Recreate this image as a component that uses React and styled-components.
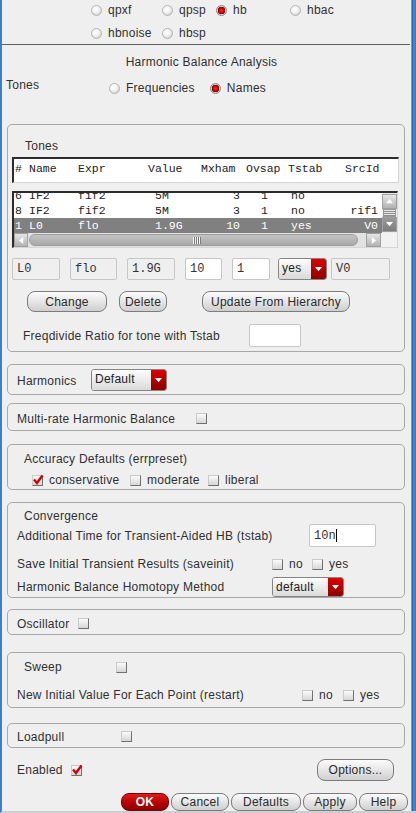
import styled, { createGlobalStyle } from 'styled-components'

const GlobalStyle = createGlobalStyle`
  html, body { margin: 0; padding: 0; background: #efefef; }
  body {
    font-family: 'Liberation Sans', Arial, sans-serif;
    font-size: 12px;
    color: #303030;
    letter-spacing: 0.25px;
  }
  * { box-sizing: border-box; }
`

const analyses = [
  { name: 'qpxf' },
  { name: 'qpsp' },
  { name: 'hb', on: true },
  { name: 'hbac' },
  { name: 'hbnoise' },
  { name: 'hbsp' },
]

const tones = [
  ['6', 'IF2', 'fif2', '5M', '3', '1', 'no', ''],
  ['8', 'IF2', 'fif2', '5M', '3', '1', 'no', 'rif1'],
  ['1', 'L0', 'flo', '1.9G', '10', '1', 'yes', 'V0'],
]

function Radio({ on, children }) {
  return (
    <RadioItem>
      <RadioDot $on={on} />
      {children}
    </RadioItem>
  )
}

function Check({ on }) {
  return (
    <Box>
      {on && (
        <svg width="12" height="12" viewBox="0 0 12 12">
          <path d="M2 5.5 L5 9 L10.5 1.5" fill="none" stroke="#d40000" strokeWidth="2.4" />
        </svg>
      )}
    </Box>
  )
}

function CheckItem({ on, w, children }) {
  return (
    <CheckLabel $w={w}>
      <Check on={on} />
      {children}
    </CheckLabel>
  )
}

function Arrow({ dir = 'down', size = 7 }) {
  const pts = {
    down: '0,1 8,1 4,6',
    up: '0,6 8,6 4,1',
    left: '6,0 6,8 1,4',
    right: '2,0 2,8 7,4',
  }
  return (
    <svg width={size} height={size} viewBox="0 0 8 8">
      <polygon points={pts[dir]} fill="#fff" />
    </svg>
  )
}

function Combo({ w, h, children }) {
  return (
    <ComboBox $w={w} $h={h}>
      <ComboText>{children}</ComboText>
      <ComboArrow>
        <Arrow dir="down" />
      </ComboArrow>
    </ComboBox>
  )
}

function ToneRow({ cells, sel }) {
  return (
    <TableRow $sel={sel}>
      <Cell $pl={1}>{cells[0]}</Cell>
      <Cell $pl={1}>{cells[1]}</Cell>
      <Cell $pl={1}>{cells[2]}</Cell>
      <Cell $pl={8}>{cells[3]}</Cell>
      <Cell $right $pr={5}>{cells[4]}</Cell>
      <Cell $pl={16}>{cells[5]}</Cell>
      <Cell $pl={4}>{cells[6]}</Cell>
      <Cell $right $pr={4}>{cells[7]}</Cell>
    </TableRow>
  )
}

export default function App() {
  return (
    <>
      <GlobalStyle />
      <Window>
        <Content>
          <AnalysisGrid>
            {analyses.map((a) => (
              <Radio key={a.name} on={a.on}>
                {a.name}
              </Radio>
            ))}
          </AnalysisGrid>
          <Separator />
          <Title>Harmonic Balance Analysis</Title>
          <TonesRow>
            <RowLabel $w={103}>Tones</RowLabel>
            <RadioGroup>
              <Radio>Frequencies</Radio>
              <Radio on>Names</Radio>
            </RadioGroup>
          </TonesRow>

          <Panel $mt={29} $pad="0 5px 4px 4px">
            <PanelTitle $ml={13} $mt={14}>Tones</PanelTitle>
            <HeaderBox>
              <TableRow>
                <Cell $pl={1}>#</Cell>
                <Cell $pl={1}>Name</Cell>
                <Cell $pl={1}>Expr</Cell>
                <Cell $pl={1}>Value</Cell>
                <Cell>Mxham</Cell>
                <Cell $pl={1}>Ovsap</Cell>
                <Cell $pl={1}>Tstab</Cell>
                <Cell $pl={1}>SrcId</Cell>
              </TableRow>
            </HeaderBox>
            <ListBox>
              <ListBody>
                <RowsViewport>
                  <RowsInner>
                    {tones.map((t, i) => (
                      <ToneRow key={i} cells={t} sel={i === 2} />
                    ))}
                  </RowsInner>
                </RowsViewport>
                <VScroll>
                  <ScrollBtn $h={15}>
                    <Arrow dir="up" />
                  </ScrollBtn>
                  <VThumb />
                  <ScrollBtn $h={15} $dark>
                    <Arrow dir="down" />
                  </ScrollBtn>
                </VScroll>
              </ListBody>
              <HScroll>
                <ScrollBtn $w={14}>
                  <Arrow dir="left" />
                </ScrollBtn>
                <Trough>
                  <HThumb>
                    <Grip />
                  </HThumb>
                </Trough>
                <ScrollBtn $w={15}>
                  <Arrow dir="right" />
                </ScrollBtn>
                <Corner />
              </HScroll>
            </ListBox>

            <EditRow>
              <Field $w={48}>L0</Field>
              <Field $w={47} $ml={10}>flo</Field>
              <Field $w={48} $ml={10}>1.9G</Field>
              <Field $w={37} $ml={10} $white>10</Field>
              <Field $w={38} $ml={10} $white>1</Field>
              <ComboSlot $ml={8}>
                <Combo w={49} h={22}>yes</Combo>
              </ComboSlot>
              <Field $w={59} $ml={4}>V0</Field>
            </EditRow>

            <ButtonRow>
              <Button $w={80} $h={21}>Change</Button>
              <Button $w={48} $h={21} $ml={12}>Delete</Button>
              <Button $w={148} $h={21} $ml={35}>Update From Hierarchy</Button>
            </ButtonRow>

            <FreqRow>
              <RowLabel $w={226}>Freqdivide Ratio for tone with Tstab</RowLabel>
              <Field $w={52} $h={23} $white />
            </FreqRow>
          </Panel>

          <Panel $mt={12} $h={31} $row $pt={1}>
            <RowLabel $w={74} $pt={2}>Harmonics</RowLabel>
            <Combo w={76} h={22}>Default</Combo>
          </Panel>

          <Panel $mt={8} $h={28} $row $pt={3}>
            <RowLabel $w={179}>Multi-rate Harmonic Balance</RowLabel>
            <Check />
          </Panel>

          <Panel $mt={13} $h={46}>
            <PanelTitle $ml={7} $mt={7}>Accuracy Defaults (errpreset)</PanelTitle>
            <OptionRow $mt={7} $pl={15}>
              <CheckItem on w={98}>conservative</CheckItem>
              <CheckItem w={78}>moderate</CheckItem>
              <CheckItem>liberal</CheckItem>
            </OptionRow>
          </Panel>

          <Panel $mt={12} $h={96}>
            <PanelTitle $ml={7} $mt={6}>Convergence</PanelTitle>
            <OptionRow $mt={1}>
              <RowLabel $w={292}>Additional Time for Transient-Aided HB (tstab)</RowLabel>
              <Field $w={67} $h={23} $white>
                10n<Caret />
              </Field>
            </OptionRow>
            <OptionRow $mt={10}>
              <RowLabel $w={255}>Save Initial Transient Results (saveinit)</RowLabel>
              <CheckItem w={40}>no</CheckItem>
              <CheckItem>yes</CheckItem>
            </OptionRow>
            <OptionRow $mt={6}>
              <RowLabel $w={255}>Harmonic Balance Homotopy Method</RowLabel>
              <Combo w={72} h={20}>default</Combo>
            </OptionRow>
          </Panel>

          <Panel $mt={11} $h={26} $row $pt={3}>
            <RowLabel $w={61}>Oscillator</RowLabel>
            <Check />
          </Panel>

          <Panel $mt={17} $h={56}>
            <OptionRow $mt={7} $pl={7}>
              <RowLabel $w={92}>Sweep</RowLabel>
              <Check />
            </OptionRow>
            <OptionRow $mt={14}>
              <RowLabel $w={285}>New Initial Value For Each Point (restart)</RowLabel>
              <CheckItem w={41}>no</CheckItem>
              <CheckItem>yes</CheckItem>
            </OptionRow>
          </Panel>

          <Panel $mt={15} $h={25} $row $pt={2}>
            <RowLabel $w={104}>Loadpull</RowLabel>
            <Check />
          </Panel>

          <EnabledRow>
            <RowLabel $w={54}>Enabled</RowLabel>
            <Check on />
            <Button $w={77} $h={22} $ml="auto">Options...</Button>
          </EnabledRow>

          <DialogButtons>
            <Button $w={48} $h={18} $primary>OK</Button>
            <Button $w={58} $h={18}>Cancel</Button>
            <Button $w={70} $h={18}>Defaults</Button>
            <Button $w={54} $h={18}>Apply</Button>
            <Button $w={49} $h={18}>Help</Button>
          </DialogButtons>
        </Content>
        <RightBar />
      </Window>
    </>
  )
}

const Window = styled.div`
  display: flex;
  width: 416px;
  height: 813px;
  border-left: 2px solid #3c7ec8;
  border-bottom: 2px solid #cfcfcf;
  background: #efefef;
  overflow: hidden;
`

const Content = styled.div`
  flex: 1;
  min-width: 0;
  display: flex;
  flex-direction: column;
`

const RightBar = styled.div`
  width: 5px;
  background: linear-gradient(to right, #6a9fd8 0, #6a9fd8 1px, #2c64aa 1px, #2c64aa 2px, #4b88cf 2px, #3b79c3 5px);
`

const AnalysisGrid = styled.div`
  display: grid;
  grid-template-columns: 71px 54px 74px auto;
  row-gap: 9px;
  padding: 3px 0 0 89px;
`

const RadioItem = styled.label`
  display: flex;
  align-items: center;
  gap: 6px;
  height: 14px;
  line-height: 14px;
  white-space: nowrap;
`

const RadioDot = styled.span`
  width: 11px;
  height: 11px;
  border-radius: 50%;
  flex: none;
  border: 1px solid ${(p) => (p.$on ? '#8a8a8a' : '#b4b4b4')};
  background: ${(p) =>
    p.$on
      ? 'radial-gradient(circle at 50% 50%, #ff2a2a 0, #d00000 2.5px, #7a0000 3.5px, #cfcfcf 4px, #9a9a9a 100%)'
      : 'radial-gradient(circle at 40% 35%, #ffffff 0, #f4f4f4 40%, #c2c2c2 100%)'};
`

const Separator = styled.div`
  height: 1px;
  margin: 4px 1px 0 -2px;
  background: #5e5e5e;
`

const Title = styled.div`
  margin-top: 10px;
  padding-right: 10px;
  line-height: 14px;
  text-align: center;
`

const TonesRow = styled.div`
  display: flex;
  margin-top: 9px;
  padding-left: 4px;
  height: 17px;
`

const RowLabel = styled.span`
  width: ${(p) => p.$w}px;
  padding-top: ${(p) => p.$pt || 0}px;
  flex: none;
  line-height: 14px;
  white-space: nowrap;
`

const RadioGroup = styled.div`
  display: flex;
  gap: 15px;
  padding-top: 3px;
`

const Panel = styled.section`
  margin: ${(p) => p.$mt}px 6px 0 5px;
  border: 1px solid #a8a8a8;
  border-radius: 5px;
  ${(p) => (p.$h ? `height: ${p.$h}px;` : '')}
  padding: ${(p) => p.$pad || `${p.$pt || 0}px 0 0 9px`};
  display: flex;
  flex-direction: ${(p) => (p.$row ? 'row' : 'column')};
  align-items: ${(p) => (p.$row ? 'center' : 'stretch')};
  flex: none;
`

const PanelTitle = styled.div`
  margin: ${(p) => p.$mt}px 0 0 ${(p) => p.$ml}px;
  line-height: 14px;
`

const Sunken = styled.div`
  border-top: 2px solid #2c2c2c;
  border-left: 2px solid #2c2c2c;
  border-right: 1px solid #d6d6d6;
  border-bottom: 1px solid #d6d6d6;
  background: #fff;
  font-family: 'Liberation Mono', 'Courier New', monospace;
  font-size: 11.5px;
  letter-spacing: 0;
  color: #222;
`

const HeaderBox = styled(Sunken)`
  margin-top: 4px;
  height: 26px;
  padding-top: 2px;
`

const ListBox = styled(Sunken)`
  margin: 8px 1px 0 0;
`

const ListBody = styled.div`
  display: flex;
  height: 40px;
`

const RowsViewport = styled.div`
  flex: 1;
  overflow: hidden;
`

const RowsInner = styled.div`
  margin-top: -5px;
`

const TableRow = styled.div`
  display: grid;
  grid-template-columns: 14px 49px 70px 54px 44px 42px 57px 1fr;
  height: 15px;
  line-height: 15px;
  background: ${(p) => (p.$sel ? '#808080' : 'transparent')};
  color: ${(p) => (p.$sel ? '#fff' : 'inherit')};
`

const Cell = styled.span`
  padding-left: ${(p) => p.$pl || 0}px;
  padding-right: ${(p) => p.$pr || 0}px;
  text-align: ${(p) => (p.$right ? 'right' : 'left')};
  white-space: nowrap;
  overflow: hidden;
`

const VScroll = styled.div`
  width: 15px;
  display: flex;
  flex-direction: column;
  padding-top: 1px;
  background: #ececec;
`

const ScrollBtn = styled.div`
  flex: none;
  ${(p) => (p.$w ? `width: ${p.$w}px;` : '')}
  ${(p) => (p.$h ? `height: ${p.$h}px;` : '')}
  display: flex;
  align-items: center;
  justify-content: center;
  background: ${(p) =>
    p.$dark
      ? 'linear-gradient(#9a9a9a, #7c7c7c)'
      : 'linear-gradient(#e6e6e6, #b2b2b2)'};
  border: 1px solid #a0a0a0;
`

const VThumb = styled.div`
  height: 8px;
  margin: 0 1px;
  background: repeating-linear-gradient(#e8e8e8 0, #e8e8e8 1px, #8e8e8e 1px, #8e8e8e 2px);
  border: 1px solid #999;
`

const HScroll = styled.div`
  display: flex;
  height: 14px;
  background: #ececec;
`

const Trough = styled.div`
  flex: 1;
  padding: 1px 8px 1px 1px;
  background: #e2e2e2;
`

const HThumb = styled.div`
  height: 100%;
  border-radius: 7px;
  background: linear-gradient(#c4c4c4, #a8a8a8);
  border: 1px solid #9c9c9c;
  display: flex;
  align-items: center;
  justify-content: center;
  padding-left: 6px;
`

const Grip = styled.span`
  width: 8px;
  height: 7px;
  background: repeating-linear-gradient(to right, #f0f0f0 0, #f0f0f0 1px, #7c7c7c 1px, #7c7c7c 2px);
`

const Corner = styled.div`
  width: 16px;
  background: #f2f2f2;
`

const EditRow = styled.div`
  display: flex;
  align-items: center;
  margin-top: 10px;
`

const Field = styled.div`
  flex: none;
  width: ${(p) => p.$w}px;
  height: ${(p) => p.$h || 22}px;
  margin-left: ${(p) => p.$ml || 0}px;
  border: 1px solid #c6c6c6;
  border-radius: 2px;
  background: ${(p) => (p.$white ? '#fff' : '#efefef')};
  padding: 0 4px;
  display: flex;
  align-items: center;
  font-family: 'Liberation Mono', 'Courier New', monospace;
  font-size: 12px;
  letter-spacing: 0;
  color: #333;
`

const Caret = styled.span`
  width: 1px;
  height: 13px;
  background: #000;
`

const ComboSlot = styled.div`
  margin-left: ${(p) => p.$ml}px;
`

const ComboBox = styled.div`
  flex: none;
  display: flex;
  width: ${(p) => p.$w}px;
  height: ${(p) => p.$h}px;
  border: 1px solid #858585;
  border-radius: 3px;
  overflow: hidden;
`

const ComboText = styled.span`
  flex: 1;
  padding: 2px 0 0 3px;
  background: linear-gradient(#fdfdfd, #dadada);
  line-height: 14px;
  color: #222;
`

const ComboArrow = styled.span`
  width: 15px;
  display: flex;
  align-items: center;
  justify-content: center;
  background: linear-gradient(#dc0000, #8c0000);
`

const ButtonRow = styled.div`
  display: flex;
  margin-top: 11px;
  padding-left: 15px;
`

const Button = styled.button`
  flex: none;
  width: ${(p) => p.$w}px;
  height: ${(p) => p.$h}px;
  margin-left: ${(p) => (p.$ml === 'auto' ? 'auto' : `${p.$ml || 0}px`)};
  padding: 0;
  border: 1px solid ${(p) => (p.$primary ? '#7a0000' : '#7c7c7c')};
  border-radius: 8px;
  background: ${(p) =>
    p.$primary
      ? 'linear-gradient(#e41a1a, #b00000 60%, #900000)'
      : 'linear-gradient(#fcfcfc, #e6e6e6 50%, #cfcfcf)'};
  font-family: 'Liberation Sans', Arial, sans-serif;
  font-size: 12px;
  letter-spacing: 0.25px;
  font-weight: ${(p) => (p.$primary ? 700 : 400)};
  color: ${(p) => (p.$primary ? '#fff' : '#2a2a2a')};
`

const FreqRow = styled.div`
  display: flex;
  align-items: center;
  margin-top: 12px;
  padding-left: 11px;
`

const OptionRow = styled.div`
  display: flex;
  align-items: center;
  margin-top: ${(p) => p.$mt}px;
  padding-left: ${(p) => p.$pl || 0}px;
  min-height: 14px;
`

const Box = styled.span`
  position: relative;
  flex: none;
  width: 11px;
  height: 11px;
  border: 1px solid;
  border-color: #cacaca #707070 #707070 #cacaca;
  background: linear-gradient(#fbfbfb, #d6d6d6);

  svg {
    position: absolute;
    left: -1px;
    top: -2px;
  }
`

const CheckLabel = styled.label`
  display: flex;
  align-items: center;
  gap: 6px;
  ${(p) => (p.$w ? `width: ${p.$w}px;` : '')}
  flex: none;
  line-height: 14px;
  white-space: nowrap;
`

const EnabledRow = styled.div`
  display: flex;
  align-items: center;
  height: 22px;
  margin-top: 11px;
  padding: 0 17px 0 15px;
`

const DialogButtons = styled.div`
  display: flex;
  justify-content: flex-end;
  gap: 2px;
  margin-top: 12px;
  padding-right: 3px;
`
